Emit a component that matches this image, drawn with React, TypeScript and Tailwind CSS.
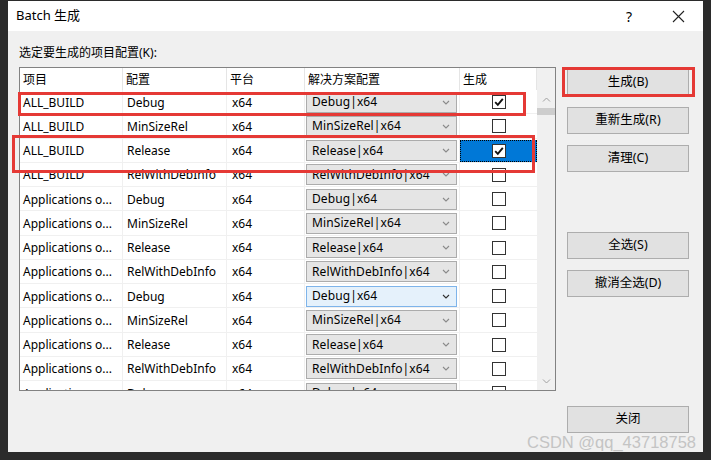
import React from "react";

type Row = { p: string; c: string; s: string; checked?: boolean; selected?: boolean; hover?: boolean };

const rows: Row[] = [
  { p: "ALL_BUILD", c: "Debug", s: "Debug|x64", checked: true },
  { p: "ALL_BUILD", c: "MinSizeRel", s: "MinSizeRel|x64" },
  { p: "ALL_BUILD", c: "Release", s: "Release|x64", checked: true, selected: true },
  { p: "ALL_BUILD", c: "RelWithDebInfo", s: "RelWithDebInfo|x64" },
  { p: "Applications o...", c: "Debug", s: "Debug|x64" },
  { p: "Applications o...", c: "MinSizeRel", s: "MinSizeRel|x64" },
  { p: "Applications o...", c: "Release", s: "Release|x64" },
  { p: "Applications o...", c: "RelWithDebInfo", s: "RelWithDebInfo|x64" },
  { p: "Applications o...", c: "Debug", s: "Debug|x64", hover: true },
  { p: "Applications o...", c: "MinSizeRel", s: "MinSizeRel|x64" },
  { p: "Applications o...", c: "Release", s: "Release|x64" },
  { p: "Applications o...", c: "RelWithDebInfo", s: "RelWithDebInfo|x64" },
  { p: "Applications o...", c: "Debug", s: "Debug|x64" },
];

function Chevron({ dark }: { dark?: boolean }) {
  return (
    <svg width="8" height="5" viewBox="0 0 8 5">
      <polyline points="1,1 4,4 7,1" fill="none" stroke={dark ? "#303030" : "#8a8a8a"} strokeWidth="1.1" />
    </svg>
  );
}

function Check({ checked }: { checked?: boolean }) {
  return (
    <div className="w-[14px] h-[14px] border border-[#333333] bg-white flex items-center justify-center">
      {checked && (
        <svg width="12" height="12" viewBox="0 0 12 12">
          <polyline points="2.2,6.2 4.8,8.8 9.8,2.8" fill="none" stroke="#111" strokeWidth="1.9" />
        </svg>
      )}
    </div>
  );
}

function Btn({ label, className = "" }: { label: string; className?: string }) {
  return (
    <div className={`h-[27px] w-[122px] bg-[#e1e1e1] border border-[#adadad] flex items-center justify-center text-[12.5px] text-black ${className}`}>
      {label}
    </div>
  );
}

export default function App() {
  return (
    <div
      className="relative w-[711px] h-[460px] bg-[#2b2b2b] overflow-hidden"
      style={{ fontFamily: '"Noto Sans", "Noto Sans CJK SC", sans-serif' }}
    >
      <div className="ml-[8px] mt-[1px] w-[695px] h-[451px] bg-[#f0f0f0] flex flex-col">
        {/* title bar */}
        <div className="h-[30px] bg-white flex items-center pl-[8px] text-[13px] text-black">
          <span>Batch 生成</span>
          <span className="ml-auto mr-[40px] text-[14px]">?</span>
          <svg width="13" height="13" viewBox="0 0 13 13" className="mr-[18px]">
            <path d="M1 1 L12 12 M12 1 L1 12" stroke="#222" strokeWidth="1.1" />
          </svg>
        </div>
        {/* body */}
        <div className="flex flex-1">
          <div className="pl-[11px] flex flex-col">
            <div className="mt-[14px] h-[16px] leading-[16px] text-[12px] text-black">选定要生成的项目配置(K):</div>
            <div className="mt-[6px] w-[537px] h-[324px] border border-[#828282] bg-white flex overflow-hidden text-[12px] text-black">
              <div className="w-[517px] flex flex-col overflow-hidden">
                {/* header */}
                <div className="h-[22px] flex shrink-0 bg-white">
                  {[
                    ["项目", "w-[103px]"],
                    ["配置", "w-[104px]"],
                    ["平台", "w-[78px]"],
                    ["解决方案配置", "w-[155px]"],
                    ["生成", "w-[77px]"],
                  ].map(([t, w]) => (
                    <div key={t} className={`${w} h-full flex items-center pl-[3px] pt-[2px] border-r border-[#e5e5e5]`}>
                      {t}
                    </div>
                  ))}
                </div>
                {rows.map((r, i) => (
                  <div key={i} className="h-[24.25px] flex shrink-0 border-b border-[#f0f0f0]">
                    <div className="w-[103px] flex items-center pl-[3px] pt-[2px] border-r border-[#f0f0f0] whitespace-nowrap">{r.p}</div>
                    <div className="w-[104px] flex items-center pl-[4px] pt-[2px] border-r border-[#f0f0f0] whitespace-nowrap">{r.c}</div>
                    <div className="w-[78px] flex items-center pl-[5px] pt-[2px] border-r border-[#f0f0f0]">x64</div>
                    <div className="w-[155px] flex items-center pl-[1px] pt-[1px] border-r border-[#f0f0f0]">
                      <div
                        className={`w-[151px] h-[21px] border flex items-center pl-[5px] pr-[6px] ${
                          r.hover ? "bg-[#e5f1fb] border-[#7eb4ea]" : "bg-[#e5e5e5] border-[#acacac]"
                        }`}
                      >
                        <span className="flex-1 whitespace-nowrap tracking-[0.1px]">{r.s}</span>
                        <Chevron dark={r.hover} />
                      </div>
                    </div>
                    <div className="w-[77px] flex items-center justify-center pt-[1px]">
                      {r.selected ? (
                        <div className="w-full h-[22px] bg-[#0078d7] border border-dotted border-black flex items-center justify-center">
                          <Check checked />
                        </div>
                      ) : (
                        <Check checked={r.checked} />
                      )}
                    </div>
                  </div>
                ))}
              </div>
              {/* scrollbar */}
              <div className="w-[18px] bg-[#f0f0f0] flex flex-col items-center">
                <div className="h-[22px] w-full" />
                <div className="h-[18px] flex items-center justify-center">
                  <svg width="9" height="5" viewBox="0 0 9 5">
                    <polyline points="1,4.5 4.5,1 8,4.5" fill="none" stroke="#a0a0a0" strokeWidth="1" />
                  </svg>
                </div>
                <div className="w-full h-[7px] bg-[#cdcdcd]" />
                <div className="flex-1" />
                <div className="h-[18px] flex items-center justify-center">
                  <svg width="9" height="5" viewBox="0 0 9 5">
                    <polyline points="1,0.5 4.5,4 8,0.5" fill="none" stroke="#a0a0a0" strokeWidth="1" />
                  </svg>
                </div>
              </div>
            </div>
          </div>
          <div className="ml-[11px] flex flex-col pt-[38px]">
            <Btn label="生成(B)" />
            <Btn label="重新生成(R)" className="mt-[11px]" />
            <Btn label="清理(C)" className="mt-[11px]" />
            <Btn label="全选(S)" className="mt-[60px]" />
            <Btn label="撤消全选(D)" className="mt-[11px]" />
            <Btn label="关闭" className="mt-[109px]" />
          </div>
        </div>
      </div>

      {/* red annotation boxes */}
      <div className="absolute left-[18px] top-[92px] w-[508px] h-[24px] border-[3px] border-[#e53935]" />
      <div className="absolute left-[12px] top-[135px] w-[523px] h-[38px] border-[3px] border-[#e53935]" />
      <div className="absolute left-[562px] top-[67px] w-[133px] h-[30px] border-[3px] border-[#e53935]" />

      {/* watermark */}
      <div
        className="absolute left-[527px] top-[432px] text-[16.5px] leading-[20px] text-[#c4c4c4] whitespace-nowrap"
        style={{ fontFamily: '"Liberation Sans", Arial, sans-serif' }}
      >
        CSDN @qq_43718758
      </div>
    </div>
  );
}
